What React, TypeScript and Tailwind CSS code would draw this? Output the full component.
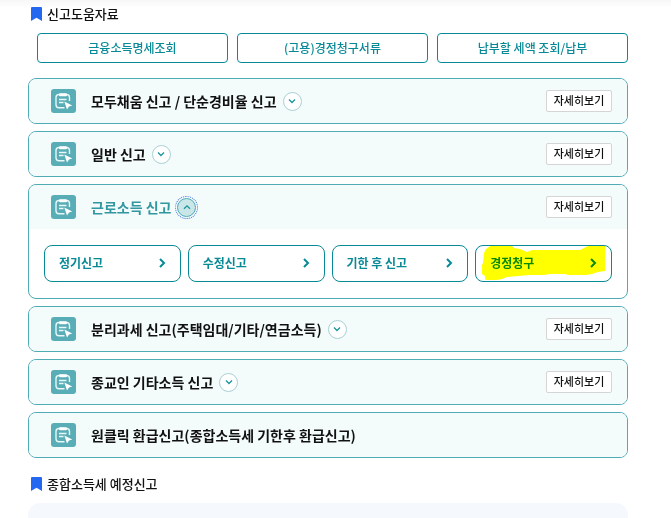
import { useState } from 'react';
import clsx from 'clsx';

const helpLinks = ['금융소득명세조회', '(고용)경정청구서류', '납부할 세액 조회/납부'];

type Report = {
  title: string;
  expandable?: boolean;
  detail?: boolean;
};

const reports: Report[] = [
  { title: '모두채움 신고 / 단순경비율 신고', expandable: true, detail: true },
  { title: '일반 신고', expandable: true, detail: true },
  { title: '근로소득 신고', expandable: true, detail: true },
  { title: '분리과세 신고(주택임대/기타/연금소득)', expandable: true, detail: true },
  { title: '종교인 기타소득 신고', expandable: true, detail: true },
  { title: '원클릭 환급신고(종합소득세 기한후 환급신고)' },
];

const actions = [
  { label: '정기신고' },
  { label: '수정신고' },
  { label: '기한 후 신고' },
  { label: '경정청구', marked: true },
];

function SectionTitle({ children }: { children: string }) {
  return (
    <h2 className="flex h-5 items-center gap-[5px] pl-[3px] text-[13px] font-medium text-[#111]">
      <svg viewBox="0 0 11 14" className="h-[14px] w-[11px] fill-[#2468f2]" aria-hidden="true">
        <path d="M1 0h9q1 0 1 1v13L5.500 10.800 0 14V1q0-1 1-1z" />
      </svg>
      {children}
    </h2>
  );
}

function ReportIcon() {
  return (
    <svg viewBox="0 0 25 24" className="h-6 w-[25px] shrink-0" fill="none" aria-hidden="true">
      <rect width="25" height="24" rx="3" fill="#58adb6" />
      <path
        d="M18.500 12V8.500Q18.500 5.500 15.500 5.500H8Q5 5.500 5 8.500v7.200q0 3 3 3h5.500"
        stroke="#e9f8f8"
        strokeWidth="1.400"
      />
      <rect x="8" y="4.200" width="8" height="3" rx="1.200" fill="#fff" />
      <path d="M8 10.500h7.500M8 13.500h4.500" stroke="#e9f8f8" strokeWidth="1.300" />
      <path d="M13.300 12.400l8 4-3.300 1.200-2 3z" fill="#fff" />
    </svg>
  );
}

function Chevron({ up }: { up: boolean }) {
  return (
    <svg viewBox="0 0 8 6" className="h-[6px] w-2" fill="none" stroke="#1c949d" strokeWidth="1.300" aria-hidden="true">
      <path d={up ? 'M1 4.800l3-3 3 3' : 'M1 1.500l3 3 3-3'} />
    </svg>
  );
}

function Marker() {
  return (
    <svg
      viewBox="0 0 123 34"
      preserveAspectRatio="none"
      className="pointer-events-none absolute inset-x-[6px] top-0 h-[34px] w-[123px] mix-blend-multiply"
      aria-hidden="true"
    >
      <path
        d="M2 7 4 3 8 0h22l2 2 6 1 7 3 5-2h48l4-2 4-2h17v25l-7 1-6 2-6 1H86l-3-1H68l-6 1H48l-12 1-11 1-5 2-5 1-4 1H5l-2-2v-3l-3-2v-9l1-2z"
        fill="#ff0"
      />
    </svg>
  );
}

export default function App() {
  const [open, setOpen] = useState('근로소득 신고');

  return (
    <div className="flex min-h-screen flex-col bg-white bg-linear-to-b from-[#f7f7f7] to-white to-[8px] pr-[43px] pl-7 font-['Noto_Sans_CJK_KR','Noto_Sans_KR',sans-serif]">
      <div className="pt-1">
        <SectionTitle>신고도움자료</SectionTitle>
      </div>

      <div className="mt-[9px] grid grid-cols-3 gap-[9px] pl-[9px]">
        {helpLinks.map((label) => (
          <button
            key={label}
            type="button"
            className="h-[30px] rounded border border-[#088a96] bg-white pb-px text-xs font-medium text-[#088a96]"
          >
            {label}
          </button>
        ))}
      </div>

      <div className="mt-[15px] flex flex-col gap-[7px]">
        {reports.map(({ title, expandable, detail }) => {
          const isOpen = title === open;
          return (
            <section key={title} className="overflow-hidden rounded-lg border border-[#4fabb4] bg-white">
              <div className="flex h-11 items-center bg-[#f3fbfb] pr-[15px] pl-[22px]">
                <ReportIcon />
                <h3 className={clsx('ml-[15px] text-[14px] font-bold', isOpen ? 'text-[#3297a1]' : 'text-[#111]')}>
                  {title}
                </h3>
                {expandable && (
                  <button
                    type="button"
                    aria-label={title}
                    aria-expanded={isOpen}
                    onClick={() => setOpen(isOpen ? '' : title)}
                    className={clsx(
                      'ml-[6px] flex size-[19px] items-center justify-center rounded-full border',
                      isOpen
                        ? 'border-[#4fabb4] bg-[#c9e6e8] outline-1 outline-offset-1 outline-[#3f74e0] outline-dotted'
                        : 'border-[#a9d0d5] bg-white',
                    )}
                  >
                    <Chevron up={isOpen} />
                  </button>
                )}
                {detail && (
                  <button
                    type="button"
                    className="ml-auto h-[22px] w-[66px] rounded-xs border border-[#d5d5d5] bg-white pb-px text-[11px] font-medium text-[#111]"
                  >
                    자세히보기
                  </button>
                )}
              </div>

              {isOpen && (
                <div className="grid grid-cols-4 gap-[7px] px-[15px] pt-4 pb-4">
                  {actions.map(({ label, marked }) => (
                    <button
                      key={label}
                      type="button"
                      className="relative flex h-[37px] items-center justify-between rounded-lg border border-[#088a96] bg-white pr-[14px] pb-[2px] pl-[14px] text-xs font-bold text-[#088a96]"
                    >
                      {label}
                      <svg viewBox="0 0 7 10" className="h-[10px] w-[7px]" fill="none" stroke="currentColor" strokeWidth="2" aria-hidden="true">
                        <path d="M1 1l4 4-4 4" />
                      </svg>
                      {marked && <Marker />}
                    </button>
                  ))}
                </div>
              )}
            </section>
          );
        })}
      </div>

      <div className="mt-4">
        <SectionTitle>종합소득세 예정신고</SectionTitle>
      </div>
      <div className="mt-[9px] flex-1 rounded-t-xl bg-[#f5f9fe]" />
    </div>
  );
}
